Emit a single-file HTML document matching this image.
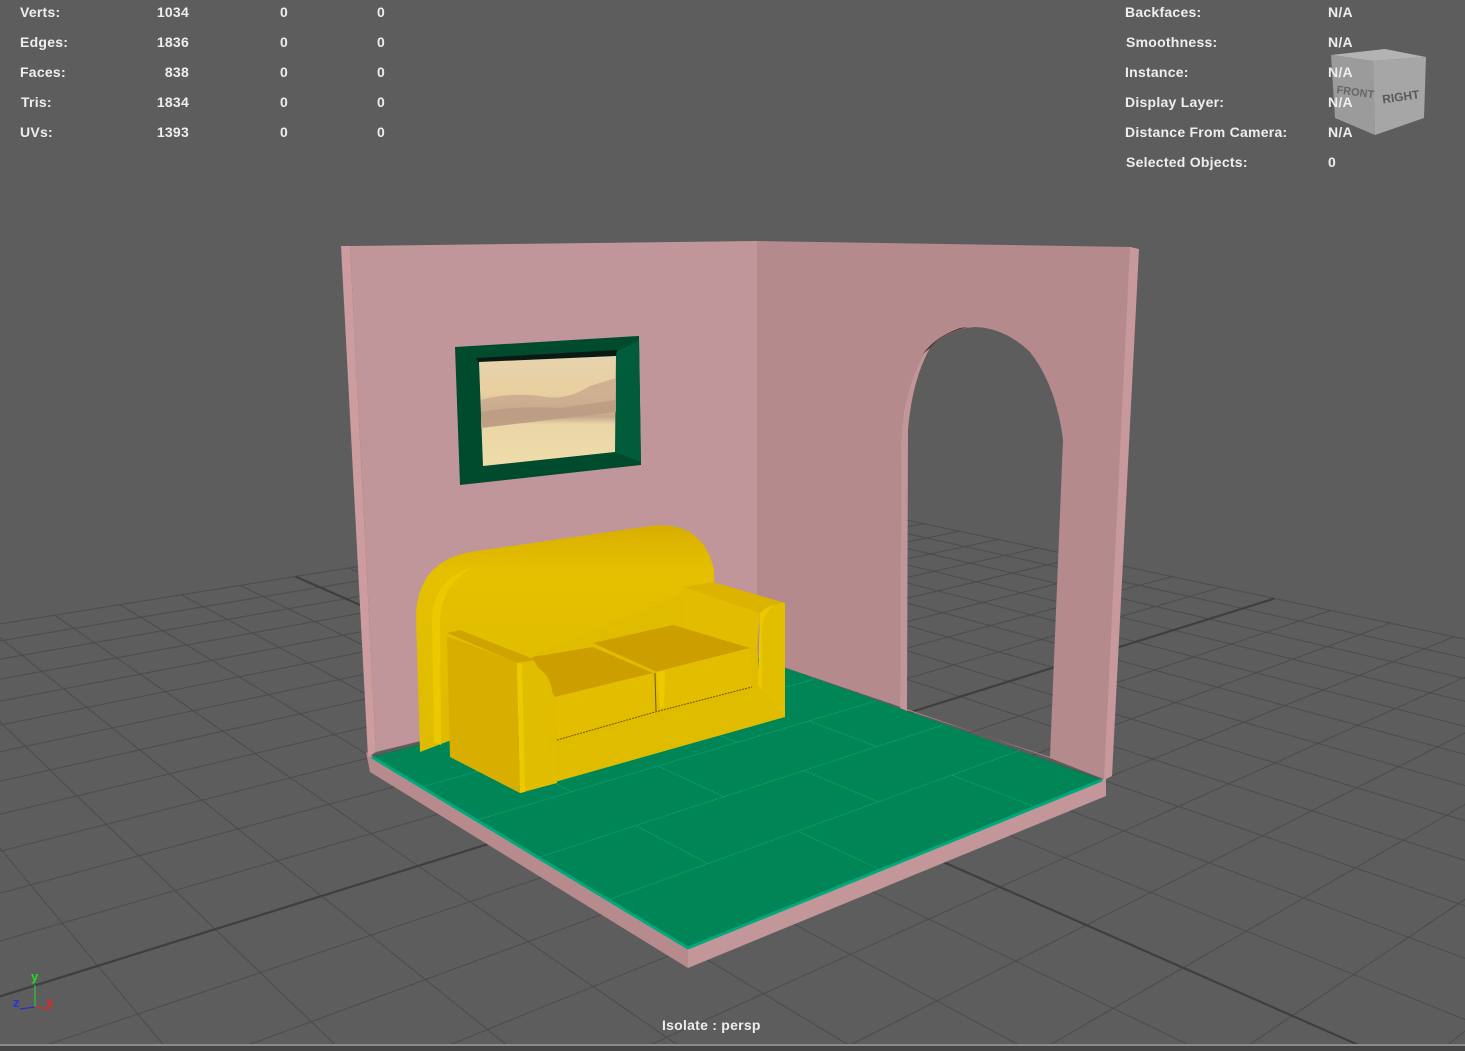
<!DOCTYPE html>
<html><head><meta charset="utf-8"><style>
html,body{margin:0;padding:0;background:#5d5d5d;width:1465px;height:1051px;overflow:hidden;}
#wrap{position:relative;width:1465px;height:1051px;overflow:hidden;}
svg{position:absolute;left:0;top:0;display:block;}
.t{position:absolute;font:bold 14px "Liberation Sans",sans-serif;color:#eeeeee;white-space:nowrap;line-height:16px;letter-spacing:0.25px;}
.r{text-align:right;}
</style></head><body><div id="wrap">
<svg width="1465" height="1051" viewBox="0 0 1465 1051">
<rect width="1465" height="1051" fill="#5d5d5d"/>
<g id="grid" stroke="#4b4b4b" stroke-width="1" fill="none"></g>
<g id="axes" stroke="#3f3f3f" stroke-width="2.2" fill="none"></g>
<polygon points="366,752 688,946 688,968 370,772" fill="#b78a8d"/>
<polygon points="688,946 1106,778 1106,796 688,968" fill="#c39699"/>
<polygon id="floor" points="372,757 757,658 1102,780 688,948" fill="#008556"/>
<g id="tiles" stroke="#17a77a" stroke-width="1" stroke-dasharray="2,1" fill="none" opacity="0.75"></g>
<polyline points="372,757 688,948 1102,780" fill="none" stroke="#00a87b" stroke-width="3"/>
<polygon points="341,246 350,246 376,752 368,757" fill="#cc9c9f"/>
<polygon points="350,246 757,241 757,658 376,752" fill="#c0969a"/>
<path fill-rule="evenodd" fill="#b48a8c" d="M757,241 L1132,247 L1106,780 L1050,758 L757,658 Z
M900,708 L901,440 Q903,390 925,352 Q945,330 975,327 Q1005,328 1030,352 Q1056,385 1063,440 L1050,757 Z"/>
<path fill="#c29699" d="M900,708 L901,440 Q903,390 925,352 L930,348 Q912,380 908,430 L907,711 Z"/>
<path fill="#7a5558" d="M925,352 Q945,330 975,327 L965,328 Q940,334 925,352 Z"/>
<path fill="#4a3035" d="M923,354 Q935,337 960,328 L968,327 Q942,333 930,348 Z"/>
<polygon points="1130,247 1139,249 1112,776 1104,780" fill="#c8999c"/>
<polygon points="455,347 639,336 641,465 460,485" fill="#004a2d"/>
<polygon points="616,352 639,340 641,462 615,452" fill="#005c3a"/>
<polygon points="476,358 617,350 616,356 479,363" fill="#0a1a12"/>
<defs>
<linearGradient id="pic" x1="0" y1="0" x2="0" y2="1">
<stop offset="0" stop-color="#e6d3ae"/><stop offset="0.35" stop-color="#e9cf9f"/>
<stop offset="0.55" stop-color="#c7a68b"/><stop offset="0.62" stop-color="#ead6a6"/>
<stop offset="1" stop-color="#eedcaa"/></linearGradient>
<linearGradient id="back" x1="0" y1="0" x2="0" y2="1"><stop offset="0" stop-color="#d9ae00"/><stop offset="0.2" stop-color="#e4c000"/><stop offset="1" stop-color="#dfbb00"/></linearGradient>
</defs>
<polygon points="479,362 616,356 615,452 483,466" fill="url(#pic)"/>
<path d="M481,400 Q510,392 540,396 Q565,402 590,386 L616,378 L616,412 L481,428 Z" fill="#c8a98e" opacity="0.8"/>
<path d="M481,412 Q520,405 560,408 L616,400 L616,412 L481,428 Z" fill="#b89880" opacity="0.7"/>
<path d="M420,752 L416,615 Q418,562 470,552 L650,526 Q703,520 714,570 L714,640 L420,752 Z" fill="url(#back)"/>
<path d="M434,742 L432,618 Q434,580 470,568 L476,566 Q442,582 440,620 L441,745 Z" fill="#ebc800"/>
<polygon points="520,660 690,590 757,640 760,700 555,750" fill="#e0bc00"/>
<polygon points="683,587 713,582 785,603 760,613" fill="#dcb400"/>
<polygon points="683,587 760,613 757,650 683,632" fill="#e1bc00"/>
<path d="M760,613 Q780,602 785,603 L785,717 L757,724 Z" fill="#e2be00"/>
<path d="M760,613 Q768,606 776,604 Q764,612 762,626 L762,722 L757,724 Z" fill="#ecc800"/>
<polygon points="555,736 757,684 785,717 555,782" fill="#e0bc00"/>
<polygon points="532,657 593,647 653,673 555,697" fill="#cc9e00"/>
<polygon points="555,697 653,673 655,712 557,740" fill="#e2bd00"/>
<polygon points="593,643 673,625 750,648 657,672" fill="#cc9e00"/>
<polygon points="655,672 750,648 752,688 657,712" fill="#e2bd00"/>
<polygon points="657,672 665,671 664,707 660,708" fill="#ecca00"/>
<polyline points="557,740 655,712 752,687" fill="none" stroke="#6f5800" stroke-width="1" stroke-dasharray="2,1"/>
<line x1="655" y1="673" x2="656" y2="711" stroke="#6f5800" stroke-width="1"/>
<polygon points="447,633 460,630 536,660 517,663" fill="#cfa400"/>
<polygon points="447,636 517,663 520,793 450,757" fill="#d8ae00"/>
<path d="M517,663 Q548,664 552,690 L557,783 L520,793 Z" fill="#e1bd00"/>
<path d="M517,663 L522,664 L525,792 L520,793 Z" fill="#edca00"/>
</svg>
<svg width="1465" height="1051" viewBox="0 0 1465 1051">
<polygon points="1331,55 1385,49 1426,57 1373,61" fill="#b3b3b3"/>
<polygon points="1331,55 1373,61 1375,135 1335,118" fill="#9b9b9b"/>
<polygon points="1373,61 1426,57 1424,118 1375,135" fill="#a6a6a6"/>
<text x="1336" y="95" font-family="Liberation Sans,sans-serif" font-weight="bold" font-size="11" fill="#666" transform="rotate(8 1350 95)">FRONT</text>
<text x="1382" y="101" font-family="Liberation Sans,sans-serif" font-weight="bold" font-size="12" fill="#5a5a5a" transform="rotate(-8 1400 96)">RIGHT</text>
<line x1="35" y1="1007" x2="35" y2="985" stroke="#22dd22" stroke-width="1"/>
<line x1="35" y1="1007" x2="50" y2="1009" stroke="#ee2222" stroke-width="1"/>
<line x1="35" y1="1007" x2="20" y2="1009" stroke="#2222ee" stroke-width="1"/>
<text x="31" y="981" font-family="Liberation Sans,sans-serif" font-weight="bold" font-size="13" fill="#22dd22">y</text>
<text x="46" y="1007" font-family="Liberation Sans,sans-serif" font-weight="bold" font-size="13" fill="#ee2222">x</text>
<text x="13" y="1007" font-family="Liberation Sans,sans-serif" font-weight="bold" font-size="13" fill="#2233ee">z</text>
<rect x="0" y="1044" width="1465" height="2" fill="#8c8c8c"/>
<rect x="0" y="1046" width="1465" height="5" fill="#454545"/>
</svg>
<div class="t" style="left:20px;top:4px">Verts:</div><div class="t r" style="left:120px;top:4px;width:69px">1034</div><div class="t" style="left:280px;top:4px">0</div><div class="t" style="left:377px;top:4px">0</div>
<div class="t" style="left:20px;top:34px">Edges:</div><div class="t r" style="left:120px;top:34px;width:69px">1836</div><div class="t" style="left:280px;top:34px">0</div><div class="t" style="left:377px;top:34px">0</div>
<div class="t" style="left:20px;top:64px">Faces:</div><div class="t r" style="left:120px;top:64px;width:69px">838</div><div class="t" style="left:280px;top:64px">0</div><div class="t" style="left:377px;top:64px">0</div>
<div class="t" style="left:21px;top:94px">Tris:</div><div class="t r" style="left:120px;top:94px;width:69px">1834</div><div class="t" style="left:280px;top:94px">0</div><div class="t" style="left:377px;top:94px">0</div>
<div class="t" style="left:20px;top:124px">UVs:</div><div class="t r" style="left:120px;top:124px;width:69px">1393</div><div class="t" style="left:280px;top:124px">0</div><div class="t" style="left:377px;top:124px">0</div>
<div class="t" style="left:1125px;top:4px">Backfaces:</div><div class="t" style="left:1328px;top:4px">N/A</div>
<div class="t" style="left:1126px;top:34px">Smoothness:</div><div class="t" style="left:1328px;top:34px">N/A</div>
<div class="t" style="left:1125px;top:64px">Instance:</div><div class="t" style="left:1328px;top:64px">N/A</div>
<div class="t" style="left:1125px;top:94px">Display Layer:</div><div class="t" style="left:1328px;top:94px">N/A</div>
<div class="t" style="left:1125px;top:124px">Distance From Camera:</div><div class="t" style="left:1328px;top:124px">N/A</div>
<div class="t" style="left:1126px;top:154px">Selected Objects:</div><div class="t" style="left:1328px;top:154px">0</div>
<div class="t" style="left:662px;top:1017px">Isolate : persp</div>
</div>
<script>
function P(u,v){var a=u*0.05088,b=v*0.05858,w=1+a+b;return[(688+a*2458-b*527)/w,(948+a*229+b*214)/w];}
function lo(c,k){return Math.max(-9,(-0.97-c)/k);}
var NS="http://www.w3.org/2000/svg";
function L(g,p,q){var l=document.createElementNS(NS,"line");l.setAttribute("x1",p[0].toFixed(1));l.setAttribute("y1",p[1].toFixed(1));l.setAttribute("x2",q[0].toFixed(1));l.setAttribute("y2",q[1].toFixed(1));g.appendChild(l);}
var g=document.getElementById("grid"),ax=document.getElementById("axes");
for(var i=-9;i<=15;i++){
 var v0=lo(i*0.05088,0.05858);if(v0<15){L(i==3?ax:g,P(i,v0),P(i,15));}
 var u0=lo(i*0.05858,0.05088);if(u0<15){L(i==3?ax:g,P(u0,i),P(15,i));}
}
var t=document.getElementById("tiles");
for(var r=1;r<5;r++){L(t,P(0,r*1.2),P(6,r*1.2));}
for(var r=0;r<5;r++){var js=(r%2)?[1.2,3.6]:[2.4,4.8];for(var j=0;j<js.length;j++)L(t,P(js[j],r*1.2),P(js[j],(r+1)*1.2));}
</script>
</body></html>
